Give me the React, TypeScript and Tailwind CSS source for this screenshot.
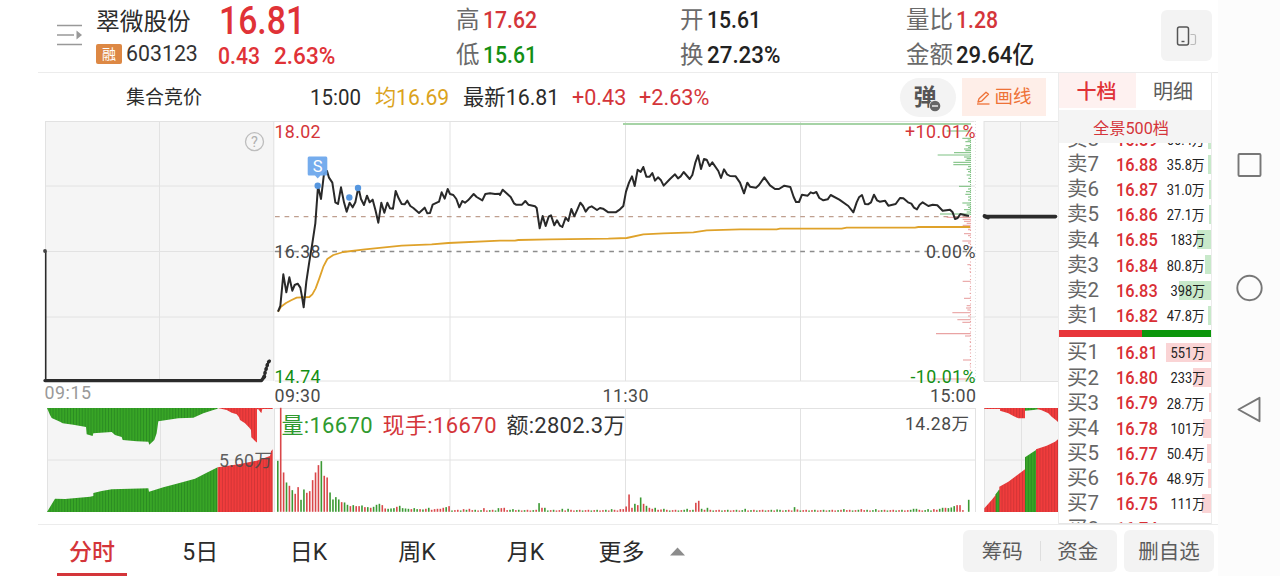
import React from "react";

type Pt = [number, number];

const RED = "#d4353a";
const GREEN = "#148f14";

// Chart series are stored on a 3x grid; each segment carries its own origin.
const parse = (ox: number, oy: number, raw: string): Pt[] =>
  raw.trim().split(/\s+/).map((p) => {
    const [x, y] = p.split(",").map(Number);
    return [ox + x / 3, oy + y / 3];
  });
const str = (pts: Pt[]) => pts.map(([x, y]) => `${x.toFixed(2)},${y.toFixed(2)}`).join(" ");

const price = str([
  ...parse(265, 115, "39,590 46,573 55,478 64,532 73,487 82,527 89,510 98,506 106,518 111,545 116,577 124,500 133,440 142,385 151,325 159,214 168,252 177,176 186,168 192,188 202,203 211,262 219,267 228,217 237,262 245,290 254,263 263,277 271,262 280,217 288,252 297,270 306,242 314,262 323,254 332,288 340,323 349,263 358,293 367,263 375,280 384,281 392,228 401,250 410,267 419,268 427,257 436,273 445,279 462,294 479,278 487,295 495,294 503,269 522,260 530,232 539,251 548,222 555,237 565,240 574,252 583,277 592,258 600,263 609,256 626,237 635,246 652,256 661,237 675,235 690,237 704,236"),
  ...parse(500, 115, "0,240 8,224 32,246 42,265 48,269 66,269 76,258 85,269 105,274 110,279 119,340 128,303 137,333 146,305 153,301 163,331 171,316 180,332 187,336 197,308 205,318 214,282 223,304 232,284 241,263 249,273 257,290 266,278 275,274 291,285 300,279 309,281 325,292 347,292 360,283 370,273 378,230 387,203 396,184 404,213 413,164 422,171 430,156 439,185 449,185 457,174 465,197 474,187 483,196 491,212 510,192 525,178 534,190 542,184 551,171 569,192 577,180 586,143 594,121 603,162 612,132 620,134 629,153 637,142 655,168 663,189 672,163 681,178 690,183 707,184"),
  ...parse(740, 115, "0,203 12,235 22,203 30,215 48,218 57,210 73,187 90,211 105,222 117,222 133,212 151,216 161,246 168,261 177,261 186,239 203,242 212,232 220,235 229,231 238,249 250,256 263,253 272,240 298,254 325,273 340,292 350,262 357,247 366,240 375,267 384,268 393,262 402,239 411,256 419,260 435,257 445,272 467,267 480,249 490,250 504,262 514,266 522,278 531,283 539,269 548,262 565,273 578,269 592,271 608,287 630,284 638,292 645,312 653,309 661,297 687,303"),
]);

const average = str([
  ...parse(265, 115, "39,590 48,575 63,564 80,555 95,548 133,546 142,538 152,520 163,490 175,455 187,432 205,420 235,411 300,403 410,392 500,388 550,384"),
  ...parse(500, 115, "0,377 45,377 55,375 150,373 325,371 380,369 430,358 490,355 580,352 620,346"),
  ...parse(740, 115, "0,343 110,343 120,341 305,341 320,338 525,338 535,336 690,336"),
]);

// Minute volumes: positive = up (red), negative = down (green).
const opening = [
  -153, 312, 118, -88, 78, -65, 54, 74, -36, -67, 57, 62, 95, 118, 140, -152, 108, 103, -58, -37, -44, -37, 29, -28, -21, 17, -20, 17,
  17, -19, 14, -14, 12, -15, -21, -24, 20, 10, -9, -10, -11, 15, -18, -11, -10, -9, 8, -11, -8, 8, -7, 9, -12, 6, 8, 9, 9, 12, -14, 17,
];
const spikes: Record<number, number> = {
  64: 8, 66: 9, 71: 11, 76: -11, 77: 11, 78: 12, 81: -8, 90: -26, 91: 12, 92: -12, 98: -9, 100: -9, 115: -8, 118: 8, 119: 8,
  120: 16, 121: 52, 122: 12, 123: -24, 124: 20, 125: -43, 126: 24, 127: -18, 128: 12, 129: 9, 130: -12, 132: 7, 133: -9, 141: -9,
  144: 27, 145: 33, 146: -9, 147: 6, 148: -12, 161: -9, 172: -7, 178: -14, 179: 7, 195: -8, 201: 8, 206: -8, 219: -9, 220: -9,
  224: -8, 226: 8, 228: -9, 229: -12, 230: 12, 231: -11, 232: -13, 233: -17, 234: 20, 235: 20, 236: 5, 237: 0, 238: -36,
};
const volumes = Array.from({ length: 239 }, (_, i) => {
  if (i < opening.length) return opening[i];
  if (i in spikes) return spikes[i];
  return ((i * 7) % 5 < 2 ? -1 : 1) * (4 + ((i * 13) % 3));
});

const Lines = () => (
  <g stroke="#e2e2e2" strokeWidth="1" fill="none">
    <path d="M45 121.5H974.500M45 186H975M45 317H975M275 381H975M45 251.500H275" />
    <path d="M45.500 121V381M159.500 121V381M273.800 121V381M450 121V381M625.500 121V381M800.500 121V381" />
    <path d="M984 121.500H1058M984 186H1058M984 251.500H1058M984 317H1058M984 381.500H1058M984 121V381M1020.500 121V381" />
    <path d="M47 460H273M160.500 408V512M47.500 408V512" />
    <path d="M275 408.500H975M275 460H975M450 408V512M625.500 408V512M800.500 408V512M975.500 408V512M274.500 408V512" />
    <path d="M984 460H1058M1021.500 408V512M984.500 408V512" />
    <path d="M975.500 121V381" strokeDasharray="1 2" />
  </g>
);

const asks: Pt[] = [
  [48, 620], [70, 667], [75, 683], [80, 676], [92, 677], [97, 684], [102, 672], [107, 676], [113, 642], [120, 593], [126, 672],
  [131, 680], [136, 676], [142, 640], [149, 640], [155, 684], [163, 680], [170, 684], [180, 680], [190, 685], [200, 684], [214, 657],
  [222, 684], [230, 678], [238, 676], [246, 684], [255, 684], [264, 667], [270, 680], [277, 684], [284, 672], [291, 680], [297, 600],
];
const bids: Pt[] = [
  [307, 620], [313, 668], [319, 672], [325, 680], [331, 668], [338, 684], [344, 684], [356, 672], [362, 684], [378, 667], [384, 684],
  [395, 685], [449, 682], [460, 689], [470, 689], [499, 668], [520, 689], [535, 689], [550, 672], [572, 680], [579, 678], [585, 682],
  [593, 637], [603, 684], [614, 652], [622, 667], [640, 688], [656, 588], [663, 675], [680, 689], [695, 689], [705, 689], [735, 669],
  [750, 689], [765, 689], [780, 689], [792, 575],
];

const depth = (ox: number, oy: number, raw: string) => str(parse(ox, oy, raw));

function Chart() {
  return (
    <svg
      className="block h-[402px] w-[1020px] shrink-0"
      viewBox="38 121 1020 402"
      fontFamily="Roboto, 'Noto Sans CJK SC', sans-serif"
      fontSize="17.800"
    >
      <defs>
        <pattern id="green" width="2.920" height="8" patternUnits="userSpaceOnUse">
          <rect width="3" height="8" fill="#38a526" />
          <rect width="0.900" height="8" fill="#2a8a22" />
        </pattern>
        <pattern id="red" width="2.920" height="8" patternUnits="userSpaceOnUse">
          <rect width="3" height="8" fill="#f03c3c" />
          <rect width="0.900" height="8" fill="#cf3435" />
        </pattern>
      </defs>
      <g fill="#f5f5f5">
        <rect x="45" y="121" width="229" height="260" />
        <rect x="984" y="121" width="74" height="260" />
        <rect x="47" y="408" width="227" height="104" />
        <rect x="984" y="408" width="74" height="104" />
      </g>
      <Lines />

      <g fill="none" stroke="#bdbdbd" strokeWidth="1.300">
        <circle cx="254.500" cy="141.700" r="9" />
      </g>
      <text x="254.500" y="147" fontSize="14.500" fill="#b0b0b0" textAnchor="middle">?</text>

      <path d="M45.700 251V380" stroke="#2b2b2b" strokeWidth="1.600" />
      <circle cx="45" cy="251" r="1.900" fill="#444" />
      <path d="M45 380.600H261.500L264.500 376.500" stroke="#2b2b2b" strokeWidth="3.400" fill="none" strokeLinecap="round" strokeLinejoin="round" />
      <path d="M264 377L265.500 371L267 366L268 362.500L270.500 360" stroke="#2b2b2b" strokeWidth="3.600" fill="none" strokeLinecap="round" strokeDasharray="0.500 3.500" />
      <path d="M264 377L265.500 371L267 366L268 362.500L270.500 360" stroke="#2b2b2b" strokeWidth="1.800" fill="none" />
      <path d="M985 216.600H1055.500" stroke="#2b2b2b" strokeWidth="3.600" strokeLinecap="round" />
      <path d="M984.500 216L988 217.500" stroke="#2b2b2b" strokeWidth="3.800" strokeLinecap="round" />

      <path d="M623 124H971" stroke="#a6d3a6" strokeWidth="1.800" />
      <path d="M275 216.700H971" stroke="#bf9f8f" strokeWidth="1.300" strokeDasharray="4.700 4.850" />
      <path d="M275 251.500H971" stroke="#8c8c8c" strokeWidth="1.300" strokeDasharray="4.700 4.850" />

      <g stroke="#7fc183" strokeWidth="1.100">
        {asks.map(([y, x]) => (
          <path key={y} d={`M${740 + x / 3} ${115 + y / 3}H970.700`} />
        ))}
        <path d="M970.500 134V216" strokeDasharray="1 1" />
      </g>
      <g stroke="#e9a3a3" strokeWidth="1.100">
        {bids.map(([y, x]) => (
          <path key={y} d={`M${740 + x / 3} ${115 + y / 3}H970.700`} />
        ))}
        <path d="M970.500 216V380" strokeDasharray="1 2.500" />
      </g>

      <g>
        <text x="274.500" y="137.500" fill={RED} textLength="46">18.02</text>
        <text x="274.500" y="257.500" fill="#4a4a4a" textLength="46">16.38</text>
        <text x="274.500" y="383" fill={GREEN} textLength="46">14.74</text>
        <text x="905" y="137.500" fill={RED} textLength="70.500">+10.01%</text>
        <text x="926" y="257.500" fill="#4a4a4a" textLength="49.500">0.00%</text>
        <text x="910.500" y="383" fill={GREEN} textLength="65">-10.01%</text>
        <text x="44.500" y="399" fill="#999" textLength="46.500">09:15</text>
        <text x="274.500" y="402" fill="#4a4a4a" textLength="46">09:30</text>
        <text x="602.500" y="402" fill="#4a4a4a" textLength="46">11:30</text>
        <text x="930" y="402" fill="#4a4a4a" textLength="46">15:00</text>
      </g>

      <polyline points={average} fill="none" stroke="#dfa22a" strokeWidth="1.800" strokeLinejoin="round" />
      <polyline points={price} fill="none" stroke="#292929" strokeWidth="2" strokeLinejoin="round" />

      <g fill="#5596df">
        <circle cx="317.700" cy="185.700" r="3.200" />
        <circle cx="349.300" cy="197.500" r="3.200" />
        <circle cx="358" cy="188" r="3.200" />
      </g>
      <path d="M309 156.500H326Q327.300 156.500 327.300 158V174Q327.300 175.500 326 175.500H320.500L317.700 178.500L315 175.500H309Q307.700 175.500 307.700 174V158Q307.700 156.500 309 156.500Z" fill="#6ba6ec" fillOpacity="0.930" />
      <text x="317.600" y="172.300" fontSize="16.500" fill="#fff" textAnchor="middle">S</text>

      <g>
        {volumes.map((v, i) => {
          const h = Math.abs(v) / 3;
          return <rect key={i} x={277 + i * 2.903} y={511.800 - h} width="1.600" height={h} fill={v > 0 ? "#d9474a" : "#3b9933"} />;
        })}
      </g>

      <polygon fill="url(#green)" points={depth(40, 380, "21,84 30,105 35,114 60,125 68,130 100,134 138,141 140,163 158,168 160,160 215,156 225,165 245,171 248,180 290,184 325,185 328,194 343,180 350,160 355,124 380,120 415,115 460,113 490,100 520,90 533,86 533,84")} />
      <polygon fill="url(#red)" points={depth(40, 380, "533,84 560,90 575,98 590,103 597,112 600,120 615,130 628,143 633,150 634,172 649,187 651,187 651,88 655,88 664,100 667,87 698,87 698,84")} />
      <polygon fill="url(#green)" points={depth(40, 380, "21,396 45,356 75,357 150,350 160,348 160,339 185,333 215,328 325,325 327,335 370,322 410,311 465,296 500,278 533,262 533,396")} />
      <polygon fill="url(#red)" points={depth(40, 380, "533,396 533,262 600,252 650,242 690,228 693,214 698,208 698,396")} />

      <polygon fill="url(#red)" points={depth(975, 330, "28,234 28,237 75,237 75,242 100,250 115,258 130,265 150,265 150,234")} />
      <polygon fill="url(#green)" points={depth(975, 330, "150,234 150,242 175,240 195,237 195,234")} />
      <polygon fill="url(#red)" points={depth(975, 330, "187,234 187,237 200,241 220,250 230,260 245,272 249,276 249,234")} />
      <polygon fill="url(#red)" points={depth(975, 330, "28,546 28,535 50,510 62,495 73,480 73,470 100,455 120,440 150,418 150,546")} />
      <polygon fill="url(#green)" points={depth(975, 330, "62,546 62,493 73,478 73,546")} />
      <polygon fill="url(#green)" points={depth(975, 330, "150,546 150,382 183,360 183,546")} />
      <polygon fill="url(#red)" points={depth(975, 330, "183,546 183,358 215,347 240,335 249,328 249,546")} />

      <text x="219" y="466.500" fill="#4a4a4a" fillOpacity="0.900" textLength="53">5.60万</text>
      <g fontSize="22">
        <text x="281.500" y="433" fill="#2f9a2f" textLength="91">量:16670</text>
        <text x="382.500" y="433" fill={RED} textLength="114">现手:16670</text>
        <text x="506.500" y="433" fill="#333" textLength="119">额:2802.3万</text>
      </g>
      <text x="905" y="429.500" fontSize="17.500" fill="#4a4a4a" textLength="64">14.28万</text>
    </svg>
  );
}

type StatProps = { label: string; value: string; tone: string; offset: string; fit?: string };
function Stat({ label, value, tone, offset, fit = "scale-x-[0.9]" }: StatProps) {
  return (
    <div className={`flex h-9 items-center text-[23.500px] leading-9 ${offset}`}>
      <span className="mr-[3px] text-[#6a6a6a]">{label}</span>
      <span className={`origin-left whitespace-nowrap text-[23.500px] font-medium ${fit} ${tone}`}>{value}</span>
    </div>
  );
}

function Header() {
  return (
    <header className="flex h-[73px] shrink-0 border-b border-[#ececec]">
      <svg className="mt-[23px] ml-[19px] h-6 w-[26px] shrink-0" viewBox="0 0 26 24" fill="none" stroke="#999" strokeWidth="1.600">
        <path d="M0 2.500H25M0 12H17M0 21.500H25" />
        <path d="M19.500 7.500L25 12L19.500 16.500Z" fill="#999" stroke="none" />
      </svg>
      <div className="ml-[13px] w-[122px] shrink-0">
        <div className="mt-[4px] h-9 text-[23.700px] leading-9 text-[#2b2b2b]">翠微股份</div>
        <div className="flex h-[28px] items-center">
          <span className="flex h-5 w-[26px] items-center justify-center rounded-[2px] bg-[#dd8844] text-[14px] leading-none text-white">融</span>
          <span className="ml-1 text-[21.300px] leading-none text-[#333]">603123</span>
        </div>
      </div>
      <div className="w-[238px] shrink-0 font-medium text-[#e03237]">
        <div className="mt-[1px] ml-[1px] h-10 w-[110px] origin-left scale-x-[0.865] text-[39px] leading-10">16.81</div>
        <div className="flex h-[31px] items-center text-[23.500px] leading-none">
          <span className="w-[56px] origin-left scale-x-[0.9]">0.43</span>
          <span className="origin-left scale-x-[0.96]">2.63%</span>
        </div>
      </div>
      <div className="grid grid-cols-[224px_226px_255px] grid-rows-[36px_36px]">
        <Stat label="高" value="17.62" tone="text-[#d4353a]" offset="pt-[3px]" />
        <Stat label="开" value="15.61" tone="text-[#222]" offset="pt-[3px]" />
        <Stat label="量比" value="1.28" tone="text-[#d4353a]" offset="pt-[3px]" />
        <Stat label="低" value="15.61" tone="text-[#148f14]" offset="pt-[1px]" />
        <Stat label="换" value="27.23%" tone="text-[#222]" offset="pt-[1px]" fit="scale-x-[0.95]" />
        <Stat label="金额" value="29.64亿" tone="text-[#222]" offset="pt-[1px]" fit="scale-x-[0.94]" />
      </div>
      <button className="mt-[10px] flex h-[51px] w-[51px] shrink-0 items-center justify-center rounded-md bg-[#f3f3f3]">
        <svg className="h-[22px] w-[22px]" viewBox="0 0 22 22" fill="none">
          <rect x="1.500" y="2" width="11" height="18" rx="2" stroke="#555" strokeWidth="1.500" />
          <path d="M5.500 16.500H8.500" stroke="#555" strokeWidth="1.400" />
          <path d="M14.500 9.500H18Q19.500 9.500 19.500 11V18Q19.500 19.500 18 19.500H14.500" stroke="#bbb" strokeWidth="1.200" />
        </svg>
      </button>
    </header>
  );
}

function InfoBar() {
  return (
    <div className="flex h-12 shrink-0 items-center text-[22px] whitespace-nowrap text-[#2b2b2b]">
      <span className="ml-[88px] w-[184px] pt-[2px] text-[19px]">集合竞价</span>
      <span className="w-[65px]"><span className="inline-block origin-left scale-x-[0.93]">15:00</span></span>
      <span className="w-[88px] text-[#dba31c]"><span className="inline-block origin-left scale-x-[0.96]">均16.69</span></span>
      <span className="w-[109px]"><span className="inline-block origin-left scale-x-[0.97]">最新16.81</span></span>
      <span className="w-[67px] text-[#d4353a]"><span className="inline-block origin-left scale-x-[0.98]">+0.43</span></span>
      <span className="w-[261px] text-[#d4353a]"><span className="inline-block origin-left scale-x-[0.985]">+2.63%</span></span>
      <button className="flex h-[39px] w-14 items-center justify-center rounded-full bg-[#f3f3f3]">
        <span className="relative -ml-[6px] text-[23px] leading-none font-bold text-[#555]">
          弹
          <svg className="absolute -right-[4px] -bottom-[3px] h-3 w-3" viewBox="0 0 12 12">
            <circle cx="6" cy="6" r="6" fill="#f3f3f3" />
            <circle cx="6" cy="6" r="5.300" fill="#666" />
            <path d="M3 6H9" stroke="#fff" strokeWidth="1.300" />
          </svg>
        </span>
      </button>
      <button className="ml-[6px] flex h-[38px] w-[84px] items-center justify-center bg-[#feeee8] pt-[2px] text-[18.500px] text-[#ee7237]">
        <svg className="mr-[3px] h-[15px] w-[15px]" viewBox="0 0 15 15" fill="none" stroke="#ee7237" strokeWidth="1.300">
          <path d="M2 11L3 7.800L10 1.200L12.500 3.300L5.500 10.200L2 11Z" strokeLinejoin="round" />
          <path d="M1 13H13.500" />
        </svg>
        画线
      </button>
    </div>
  );
}

type Level = { name: string; price: string; amount: string; bar: number };
const sells: Level[] = [
  { name: "卖8", price: "16.89", amount: "66.4万", bar: 3 },
  { name: "卖7", price: "16.88", amount: "35.8万", bar: 3 },
  { name: "卖6", price: "16.87", amount: "31.0万", bar: 2 },
  { name: "卖5", price: "16.86", amount: "27.1万", bar: 2 },
  { name: "卖4", price: "16.85", amount: "183万", bar: 14 },
  { name: "卖3", price: "16.84", amount: "80.8万", bar: 6 },
  { name: "卖2", price: "16.83", amount: "398万", bar: 32 },
  { name: "卖1", price: "16.82", amount: "47.8万", bar: 3 },
];
const buys: Level[] = [
  { name: "买1", price: "16.81", amount: "551万", bar: 45 },
  { name: "买2", price: "16.80", amount: "233万", bar: 18 },
  { name: "买3", price: "16.79", amount: "28.7万", bar: 2 },
  { name: "买4", price: "16.78", amount: "101万", bar: 8 },
  { name: "买5", price: "16.77", amount: "50.4万", bar: 4 },
  { name: "买6", price: "16.76", amount: "48.9万", bar: 3 },
  { name: "买7", price: "16.75", amount: "111万", bar: 9 },
  { name: "买8", price: "16.74", amount: "", bar: 0 },
];

function LevelRow({ level, tone }: { level: Level; tone: string }) {
  return (
    <div className="relative flex h-[25.200px] shrink-0 items-center whitespace-nowrap">
      <div className={`absolute top-[3px] right-0 h-[19px] ${tone}`} style={{ width: level.bar }} />
      <span className="relative ml-[8px] w-[49px] text-[20.500px] leading-none text-[#666]">{level.name}</span>
      <span className="relative w-12 origin-left scale-x-[0.86] text-[19px] leading-none font-medium text-[#d92f35]">{level.price}</span>
      <span className="relative mt-[3px] mr-[6px] ml-auto origin-right scale-x-[0.93] text-[13.800px] leading-none text-[#222]">{level.amount}</span>
    </div>
  );
}

function OrderBook() {
  return (
    <aside className="flex w-[154px] shrink-0 flex-col border-x border-[#ececec]">
      <div className="flex h-[35px] shrink-0 items-center text-[20px]">
        <span className="flex h-full w-[77px] items-center justify-center bg-[#fef1f0] pt-[3px] pr-[2px] font-medium text-[#e03237]">十档</span>
        <span className="flex-1 pt-[3px] pr-[1px] text-center text-[#5c5c5c]">明细</span>
      </div>
      <div className="mt-[2px] flex h-[33px] shrink-0 items-center justify-center bg-[#f4f4f4] pt-[5px] pr-[8px] text-[16.200px] text-[#d4353a]">全景500档</div>
      <div className="flex h-[187px] shrink-0 flex-col justify-end overflow-hidden pb-[2px]">
        {sells.map((l) => <LevelRow key={l.name} level={l} tone="bg-[#c8e9ca]" />)}
      </div>
      <div className="flex h-[7px] shrink-0">
        <div className="w-[83px] bg-[#e8353a]" />
        <div className="flex-1 bg-[#0b960b]" />
      </div>
      <div className="flex min-h-0 flex-1 flex-col overflow-hidden border-b border-[#e6e6e6] pt-[3px]">
        {buys.map((l) => <LevelRow key={l.name} level={l} tone="bg-[#fad4d5]" />)}
      </div>
    </aside>
  );
}

function BottomBar() {
  return (
    <footer className="flex h-[53px] shrink-0 items-center border-t border-[#ececec] text-[23px] text-[#2b2b2b]">
      <div className="flex h-full w-[108px] flex-col items-center pt-[10px] font-medium text-[#d4353a]">
        <span className="flex-1 leading-[36px]">分时</span>
        <span className="h-[4px] w-[70px] bg-[#d4353a]" />
      </div>
      {["5日", "日K", "周K", "月K"].map((t) => (
        <span key={t} className="w-[108.400px] pt-[4px] text-center">{t}</span>
      ))}
      <span className="ml-[19px] w-[71px] pt-[4px]">更多</span>
      <svg className="h-[10px] w-[15px]" viewBox="0 0 15 10"><path d="M0 9.500L7.500 1.500L15 9.500Z" fill="#8c8c8c" /></svg>
      <div className="ml-auto flex h-[42px] w-[154px] items-center rounded-md bg-[#f3f3f3] text-[20.500px] text-[#5c5c5c]">
        <span className="flex-1 pt-[3px] pl-[2px] text-center">筹码</span>
        <span className="h-5 w-px bg-[#dedede]" />
        <span className="flex-1 pt-[3px] pr-[2px] text-center">资金</span>
      </div>
      <div className="mr-[4px] ml-[7px] flex h-[42px] w-[90px] items-center justify-center rounded-md bg-[#f3f3f3] pt-[3px] text-[20.500px] text-[#5c5c5c]">删自选</div>
    </footer>
  );
}

function SystemNav() {
  return (
    <nav className="flex w-[62px] shrink-0 flex-col items-center bg-[#fcfcfc]">
      <svg className="mt-[152px] h-[26px] w-[26px]" viewBox="0 0 26 26" fill="none" stroke="#777" strokeWidth="1.900">
        <rect x="2.500" y="2" width="22" height="22" rx="1" />
      </svg>
      <svg className="mt-[96px] h-7 w-7" viewBox="0 0 28 28" fill="none" stroke="#777" strokeWidth="1.900">
        <circle cx="14.500" cy="14" r="12.200" />
      </svg>
      <svg className="mt-[94px] h-7 w-[26px]" viewBox="0 0 26 28" fill="none" stroke="#777" strokeWidth="1.900" strokeLinejoin="round">
        <path d="M2.500 13.500L23.500 1.800V25.200Z" />
      </svg>
    </nav>
  );
}

export default function App() {
  return (
    <div className="flex h-[576px] w-[1280px] overflow-hidden bg-white font-[Roboto,'Noto_Sans_CJK_SC',sans-serif]">
      <main className="ml-[38px] flex w-[1180px] shrink-0 flex-col">
        <Header />
        <div className="flex h-[451px] shrink-0">
          <section className="flex w-[1020px] shrink-0 flex-col">
            <InfoBar />
            <Chart />
          </section>
          <OrderBook />
        </div>
        <BottomBar />
      </main>
      <SystemNav />
    </div>
  );
}
